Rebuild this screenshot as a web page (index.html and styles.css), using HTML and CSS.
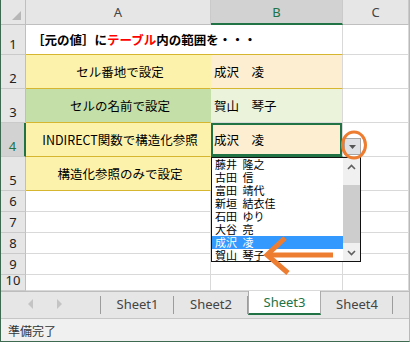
FILE: index.html
```html
<!DOCTYPE html>
<html lang="ja">
<head>
  <meta charset="UTF-8" />
  <title>入力規則 リスト</title>
  <link rel="stylesheet" href="styles.css">
</head>
<body>
  <div class="window">
    <!-- SHEET GRID -->
    <div class="grid">
      <div class="corner">
        <svg width="10" height="10" viewBox="0 0 10 10"><polygon points="9,0 9,9 0,9" fill="#b7b7b7"/></svg>
      </div>
      <div class="colhead">A</div>
      <div class="colhead sel">B</div>
      <div class="colhead">C</div>

      <div class="rowhead">1</div>
      <div class="cell title gold">［元の値］に<span class="red">テーブル</span>内の範囲を・・・</div>
      <div class="cell b1 gold"></div>
      <div class="cell"></div>

      <div class="rowhead">2</div>
      <div class="cell label yellow gold">セル番地で設定</div>
      <div class="cell value peach gold">成沢　凌</div>
      <div class="cell"></div>

      <div class="rowhead">3</div>
      <div class="cell label green gold">セルの名前で設定</div>
      <div class="cell value lightgreen">賀山　琴子</div>
      <div class="cell"></div>

      <div class="rowhead sel">4</div>
      <div class="cell label yellow gold">INDIRECT関数で構造化参照</div>
      <div class="cell value peach active">成沢　凌</div>
      <div class="cell"></div>

      <div class="rowhead">5</div>
      <div class="cell label yellow gold">構造化参照のみで設定</div>
      <div class="cell"></div>
      <div class="cell"></div>

      <div class="rowhead">6</div><div class="cell"></div><div class="cell"></div><div class="cell"></div>
      <div class="rowhead">7</div><div class="cell"></div><div class="cell"></div><div class="cell"></div>
      <div class="rowhead">8</div><div class="cell"></div><div class="cell"></div><div class="cell"></div>
      <div class="rowhead">9</div><div class="cell"></div><div class="cell"></div><div class="cell"></div>
      <div class="rowhead">10</div><div class="cell"></div><div class="cell"></div><div class="cell"></div>
    </div>

    <!-- DROPDOWN BUTTON -->
    <div class="dd-button">
      <svg width="7" height="4" viewBox="0 0 7 4"><polygon points="0,0 7,0 3.5,4" fill="#555"/></svg>
    </div>

    <!-- DROPDOWN LIST -->
    <div class="dropdown">
      <ul class="options">
        <li>藤井 隆之</li>
        <li>古田 信</li>
        <li>富田 靖代</li>
        <li>新垣 結衣佳</li>
        <li>石田 ゆり</li>
        <li>大谷 亮</li>
        <li class="selected">成沢 凌</li>
        <li>賀山 琴子</li>
      </ul>
      <div class="scrollbar">
        <div class="sb-btn">
          <svg width="9" height="6" viewBox="0 0 9 6"><polyline points="1,5 4.5,1.5 8,5" fill="none" stroke="#606060" stroke-width="1.6"/></svg>
        </div>
        <div class="sb-track"><div class="sb-thumb"></div></div>
        <div class="sb-btn">
          <svg width="9" height="6" viewBox="0 0 9 6"><polyline points="1,1 4.5,4.5 8,1" fill="none" stroke="#606060" stroke-width="1.6"/></svg>
        </div>
      </div>
    </div>

    <!-- ANNOTATIONS -->
    <svg class="marks" width="410" height="342" viewBox="0 0 410 342">
      <ellipse cx="354" cy="145" rx="11.5" ry="13" fill="none" stroke="#ed7d31" stroke-width="3"/>
      <line x1="268" y1="255" x2="333" y2="255" stroke="#ed7d31" stroke-width="5"/>
      <polyline points="285,238 267,255 288,273" fill="none" stroke="#ed7d31" stroke-width="5"/>
    </svg>

    <!-- SHEET TABS -->
    <div class="tabbar">
      <div class="nav">
        <svg width="6" height="10" viewBox="0 0 6 10"><polygon points="5,0 5,10 0,5" fill="#c4c4c4"/></svg>
        <svg width="6" height="10" viewBox="0 0 6 10"><polygon points="1,0 1,10 6,5" fill="#c4c4c4"/></svg>
      </div>
      <div class="tab">Sheet1</div>
      <div class="tab w74">Sheet2</div>
      <div class="tab active">Sheet3</div>
      <div class="tab w72">Sheet4</div>
    </div>

    <!-- STATUS -->
    <div class="status">準備完了</div>
  </div>
</body>
</html>
```

FILE: styles.css
```css
body {
  margin: 0;
  background: #fff;
}

.window {
  position: relative;
  width: 410px;
  height: 342px;
  box-sizing: border-box;
  border-left: 1px solid #3d6a50;
  border-right: 1px solid #b9b9b9;
  border-bottom: 1px solid #3d6a50;
  display: flex;
  flex-direction: column;
  overflow: hidden;
  font-family: "Noto Sans CJK JP", sans-serif;
  color: #000;
}

/* grid */
.grid {
  display: grid;
  grid-template-columns: 25px 185px 132px 66px;
  grid-template-rows: 25px 30px 34px 34px 34px 34px 21px 21px 21px 21px 16px;
  background: #fff;
}

.grid > div {
  box-sizing: border-box;
  min-width: 0;
}

.corner {
  background: #e6e6e6;
  border-right: 1px solid #bfbfbf;
  border-bottom: 1px solid #bfbfbf;
  display: flex;
  align-items: flex-end;
  justify-content: flex-end;
  padding: 0 3px 3px 0;
}

.corner svg {
  display: block;
}

.colhead {
  background: #e6e6e6;
  border-right: 1px solid #cacaca;
  border-bottom: 1px solid #bfbfbf;
  display: flex;
  align-items: center;
  justify-content: center;
  font-family: "Noto Sans", sans-serif;
  font-size: 13px;
  color: #444;
}

.colhead.sel {
  background: #d2d2d2;
  color: #217346;
  border-bottom: 2px solid #217346;
}

.rowhead {
  background: #e6e6e6;
  border-right: 1px solid #bfbfbf;
  border-bottom: 1px solid #cacaca;
  display: flex;
  align-items: flex-end;
  justify-content: center;
  padding-bottom: 2px;
  font-family: "Noto Sans", sans-serif;
  font-size: 13px;
  line-height: 16px;
  color: #222;
}

.rowhead.sel {
  background: #d2d2d2;
  color: #217346;
  border-right: 2px solid #217346;
}

.cell {
  border-right: 1px solid #d9d9d9;
  border-bottom: 1px solid #d9d9d9;
  display: flex;
  align-items: center;
  font-size: 12.5px;
  white-space: nowrap;
}

.cell.gold {
  border-bottom-color: #d6b52f;
}

.title {
  padding-left: 6px;
  font-weight: bold;
  overflow: visible;
  border-right: none;
}

.title .red {
  color: #ff0000;
}

.b1 {
  background: transparent;
}

.label {
  justify-content: center;
  padding-left: 4px;
}

.value {
  padding-left: 3px;
}

.yellow { background: #fdf2ab; border-right-color: #fdf2ab; }
.green { background: #c5dfa9; border-right-color: #c5dfa9; }
.peach { background: #fdeed2; }
.lightgreen { background: #ebf4da; }

.cell.active {
  box-shadow: inset 0 0 0 2px #217346;
  border-bottom-color: #217346;
}

/* dropdown */
.dd-button {
  position: absolute;
  left: 343px;
  top: 138px;
  width: 17px;
  height: 17px;
  box-sizing: border-box;
  background: #dfe1e5;
  border: 1px solid #a6a6a6;
  display: flex;
  align-items: center;
  justify-content: center;
}

.dropdown {
  position: absolute;
  left: 210px;
  top: 157px;
  width: 150px;
  height: 105px;
  box-sizing: border-box;
  border: 1px solid #111;
  background: #fff;
  display: flex;
}

.options {
  list-style: none;
  margin: 0;
  padding: 0;
  flex: 1;
}

.options li {
  height: 13px;
  line-height: 13px;
  font-size: 11px;
  padding-left: 3px;
  word-spacing: 3px;
  color: #000;
}

.options li.selected {
  background: #3399ff;
  color: #fff;
}

.scrollbar {
  width: 17px;
  background: #f0f0f0;
  display: flex;
  flex-direction: column;
}

.sb-btn {
  height: 17px;
  display: flex;
  align-items: center;
  justify-content: center;
}

.sb-track {
  flex: 1;
  padding-top: 10px;
}

.sb-thumb {
  height: 58px;
  background: #cdcdcd;
}

.marks {
  position: absolute;
  left: -1px;
  top: 0;
  pointer-events: none;
}

/* tabs */
.tabbar {
  height: 28px;
  box-sizing: border-box;
  background: #e6e6e6;
  border-top: 1px solid #bdbdbd;
  border-bottom: 1px solid #c6c6c6;
  display: flex;
  align-items: flex-start;
  font-family: "Noto Sans", sans-serif;
  font-size: 13px;
  color: #444;
}

.nav {
  width: 100px;
  height: 23px;
  display: flex;
  align-items: center;
  padding-left: 27px;
  gap: 22px;
  box-sizing: border-box;
  position: relative;
}

.nav::after,
.tab::after {
  content: "";
  position: absolute;
  right: 0;
  top: 4px;
  height: 18px;
  border-right: 1px solid #9c9c9c;
}

.tab {
  position: relative;
  width: 73px;
  height: 23px;
  display: flex;
  align-items: center;
  justify-content: center;
}

.tab.w74 { width: 74px; }
.tab.w72 { width: 72px; }

.tab.active {
  background: #fff;
  color: #217346;
  box-sizing: border-box;
  border-left: 1px solid #ababab;
  border-right: 1px solid #ababab;
  border-bottom: 2px solid #217346;
  margin-top: -1px;
  height: 24px;
}

.tab.active::after {
  display: none;
}

/* status */
.status {
  flex: 1;
  background: #f0f0f0;
  display: flex;
  align-items: center;
  padding-left: 7px;
  font-size: 12px;
  color: #333;
}
```
